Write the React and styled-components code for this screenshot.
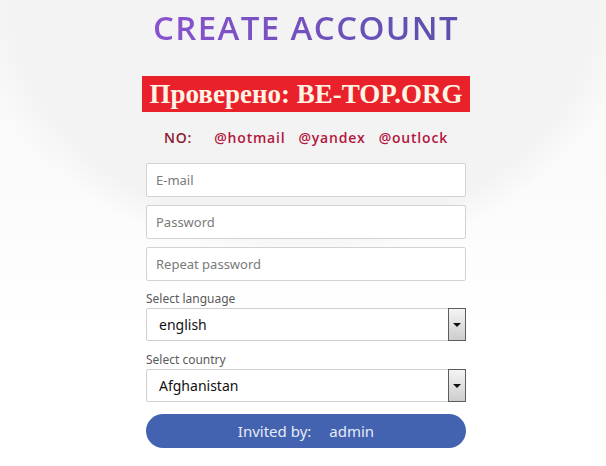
import React from 'react';
import styled, { createGlobalStyle } from 'styled-components';

const GlobalStyle = createGlobalStyle`
  html, body {
    margin: 0;
    padding: 0;
  }
  body {
    min-height: 466px;
    background:
      radial-gradient(ellipse 330px 260px at 50% 0, #f3f3f4 0%, #f3f3f4 88%, rgba(246, 246, 247, 0) 100%),
      linear-gradient(#f8f8f8 0, #fbfbfb 200px, #ffffff 330px);
    font-family: "Open Sans", "Liberation Sans", sans-serif;
  }
`;

const Page = styled.div`
  display: flex;
  flex-direction: column;
  align-items: center;
  padding: 12px 0 0 6px;
`;

const Title = styled.h1`
  margin: 0;
  font-family: "Open Sans", sans-serif;
  font-weight: 600;
  font-size: 33px;
  line-height: 32px;
  letter-spacing: 1.4px;
  background: linear-gradient(90deg, #8a52d0, #5a50ac);
  -webkit-background-clip: text;
  background-clip: text;
  color: transparent;
`;

const Banner = styled.div`
  margin-top: 32px;
  width: 328px;
  height: 36px;
  background: #e8212b;
  color: #fff4e6;
  font-family: "Liberation Serif", serif;
  font-weight: 700;
  font-size: 27px;
  line-height: 36px;
  text-align: center;
  white-space: nowrap;
`;

const Blocked = styled.div`
  margin-top: 17px;
  display: flex;
  gap: 13px;
  font-family: "Open Sans", sans-serif;
  font-weight: 600;
  font-size: 14px;
  line-height: 18px;
  letter-spacing: 0.8px;
`;

const Mail = styled.span`
  color: ${(p) => (p.$head ? '#8c1b2d' : '#b3173c')};
  margin-right: ${(p) => (p.$head ? '9px' : '0')};
`;

const Form = styled.form`
  margin-top: 16px;
  width: 320px;
  display: flex;
  flex-direction: column;
  gap: 8px;
`;

const Input = styled.input`
  box-sizing: border-box;
  width: 100%;
  height: 34px;
  padding: 0 9px;
  border: 1px solid #d2d2d2;
  border-radius: 2px;
  background: #fff;
  font-family: "Noto Sans", sans-serif;
  font-size: 13px;
  color: #333;
  outline: none;

  &::placeholder {
    color: #7a7a7a;
  }
`;

const Field = styled.div`
  margin-top: ${(p) => (p.$first ? '3px' : '4px')};
  display: flex;
  flex-direction: column;
  gap: 2px;
`;

const Label = styled.label`
  font-family: "Noto Sans", sans-serif;
  font-size: 12px;
  line-height: 14px;
  color: #5a5a5a;
`;

const SelectBox = styled.div`
  box-sizing: border-box;
  height: 33px;
  display: flex;
  border: 1px solid #d0d0d0;
  border-radius: 2px;
  background: #fff;
`;

const Select = styled.select`
  flex: 1;
  appearance: none;
  border: none;
  background: transparent;
  padding: 0 12px;
  font-family: "Noto Sans", sans-serif;
  font-size: 14px;
  color: #111;
  outline: none;
`;

const Arrow = styled.div`
  width: 16px;
  margin: -1px -1px -1px 0;
  border: 1px solid #5c5c5c;
  background: linear-gradient(#f4f4f4, #cdcdcd);
  display: flex;
  align-items: center;
  justify-content: center;

  &::after {
    content: '';
    border-left: 4px solid transparent;
    border-right: 4px solid transparent;
    border-top: 4px solid #111;
  }
`;

const Invite = styled.button`
  margin-top: 4px;
  height: 34px;
  border: none;
  border-radius: 17px;
  background: #4362b0;
  color: #e6ebf7;
  font-family: "Noto Sans", sans-serif;
  font-size: 15px;
  display: flex;
  align-items: center;
  justify-content: center;
  gap: 18px;
`;

export default function App() {
  return (
    <>
      <GlobalStyle />
      <Page>
        <Title>CREATE ACCOUNT</Title>
        <Banner>Проверено: BE-TOP.ORG</Banner>
        <Blocked>
          <Mail $head>NO:</Mail>
          <Mail>@hotmail</Mail>
          <Mail>@yandex</Mail>
          <Mail>@outlock</Mail>
        </Blocked>
        <Form onSubmit={(e) => e.preventDefault()}>
          <Input type="email" placeholder="E-mail" />
          <Input type="password" placeholder="Password" />
          <Input type="password" placeholder="Repeat password" />
          <Field $first>
            <Label>Select language</Label>
            <SelectBox>
              <Select defaultValue="english">
                <option value="english">english</option>
                <option value="russian">russian</option>
              </Select>
              <Arrow />
            </SelectBox>
          </Field>
          <Field>
            <Label>Select country</Label>
            <SelectBox>
              <Select defaultValue="af">
                <option value="af">Afghanistan</option>
                <option value="al">Albania</option>
              </Select>
              <Arrow />
            </SelectBox>
          </Field>
          <Invite type="button">
            <span>Invited by:</span>
            <span>admin</span>
          </Invite>
        </Form>
      </Page>
    </>
  );
}
